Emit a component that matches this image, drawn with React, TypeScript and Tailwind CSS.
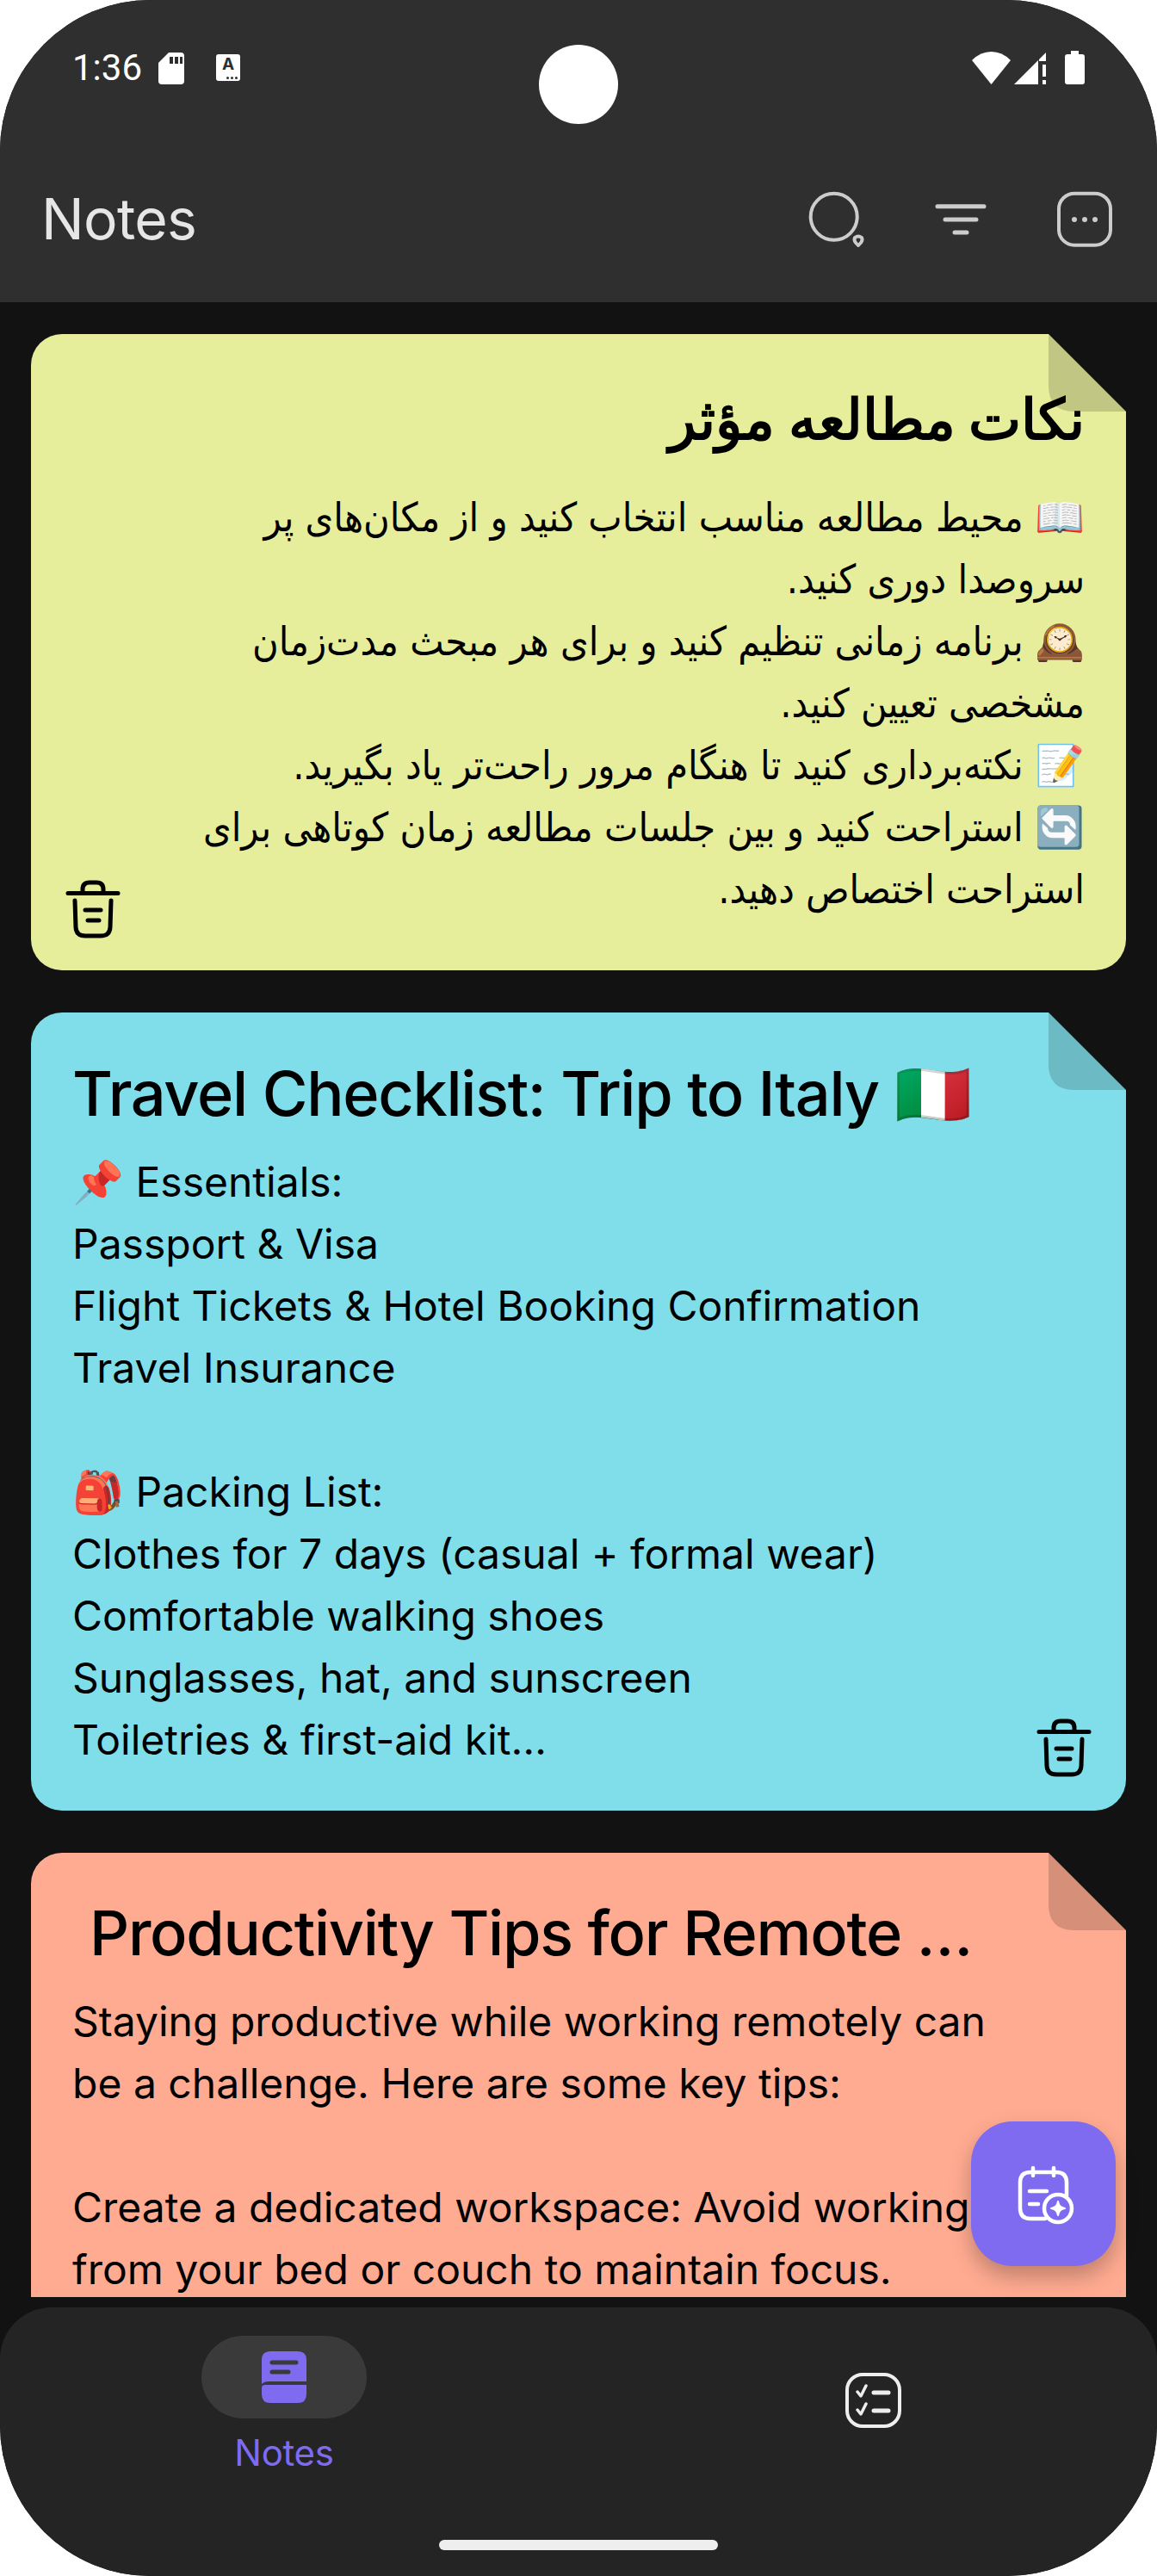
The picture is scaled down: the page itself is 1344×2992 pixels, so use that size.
import React from "react";

const Trash = () => (
  <svg width="66" height="72" viewBox="0 0 66 72" fill="none" stroke="#000" strokeWidth="5" strokeLinecap="round" strokeLinejoin="round">
    <path d="M4 16.5 H62" />
    <path d="M21 15 V12 Q21 4 29 4 H37 Q45 4 45 12 V15" />
    <path d="M12 25 L13 56 Q13.500 66 24 66 H42 Q52.500 66 53 56 L54 25" />
    <path d="M24 36 H42" />
    <path d="M27 48 H40" />
  </svg>
);

const Fold = () => (
  <svg className="absolute right-0 top-0" width="90" height="90" viewBox="0 0 90 90">
    <path d="M0 0 H90 V90 Z" fill="#121212" />
    <path d="M0 0 L90 90 H30 Q0 90 0 60 Z" fill="#000" fillOpacity="0.16" />
  </svg>
);

const sans = "font-['Inter','Noto_Sans',sans-serif]";
const fa = "font-['DejaVu_Sans_Condensed','DejaVu_Sans',sans-serif] font-stretch-condensed";

export default function App() {
  return (
    <div className="relative h-[2992px] w-[1344px] bg-white">
      <div className={`flex h-full flex-col overflow-hidden rounded-[175px] bg-[#121212] ${sans}`}>
        <header className="h-[351px] shrink-0 bg-[#2f2f2f]">
          <div className="flex h-[39px] items-center pl-[84px] pr-[84px] pt-[59px] text-white box-content">
            <span className="w-[100px] font-['Roboto',sans-serif] text-[42px] leading-[39px]">1:36</span>
            <svg width="30" height="38" viewBox="0 0 30 38" fill="#fff"><path d="M12 1 H26 Q30 1 30 5 V34 Q30 38 26 38 H4 Q0 38 0 34 V13 Z" /><path d="M13 6h4v8h-4zM19 6h4v8h-4zM25 6h3v8h-3z" fill="#2f2f2f" /></svg>
            <div className="relative ml-[37px] flex h-[31px] w-[28px] items-start justify-center rounded-[3px] bg-white text-[19px] font-bold leading-[24px] text-[#2f2f2f]">A
              <span className="absolute bottom-[2px] right-[3px] h-[3px] w-[3px] rounded-full bg-[#2f2f2f]" />
              <span className="absolute bottom-[2px] right-[8px] h-[3px] w-[3px] rounded-full bg-[#2f2f2f]" />
              <span className="absolute bottom-[2px] right-[13px] h-[3px] w-[3px] rounded-full bg-[#2f2f2f]" />
            </div>
            <div className="ml-auto flex items-center">
              <svg width="45" height="38" viewBox="0 0 45 38" fill="#fff"><path d="M22.500 38 L0 10 Q10 0 22.500 0 Q35 0 45 10 Z" /></svg>
              <svg className="ml-[4px]" width="37" height="38" viewBox="0 0 37 38" fill="#fff"><path d="M0 38 L28 10 V38 Z" /><path d="M29 9 L37 1 V11 H29 Z" /><path d="M33 15h4v14h-4zM33 33h4v5h-4z" /></svg>
              <svg className="ml-[22px]" width="23" height="39" viewBox="0 0 23 39" fill="#fff"><path d="M7 0 H16 V4 H20 Q23 4 23 7 V36 Q23 39 20 39 H3 Q0 39 0 36 V7 Q0 4 3 4 H7 Z" /></svg>
            </div>
          </div>
          <div className="mt-[108px] flex h-[96px] items-center pl-[48px] pr-[48px] text-[#e6e6e6]">
            <span className="text-[66px] leading-[96px] tracking-[-0.7px]">Notes</span>
            <div className="ml-auto flex gap-[72px]">
              <svg width="72" height="72" viewBox="0 0 72 72" fill="none" stroke="#cccccc" strokeWidth="4">
                <circle cx="32.700" cy="33.700" r="27" />
                <path d="M57 58 Q61 55 65 58 Q67 62 61 67 Q55 62 57 58 Z" strokeLinejoin="round" />
              </svg>
              <svg width="72" height="72" viewBox="0 0 72 72" fill="none" stroke="#cccccc" strokeWidth="5" strokeLinecap="round">
                <path d="M9 21.700 H63 M18 37 H54 M29 52 H43" />
              </svg>
              <svg width="72" height="72" viewBox="0 0 72 72" fill="none" stroke="#cccccc" strokeWidth="4">
                <rect x="6" y="6.700" width="60" height="60" rx="18" />
                <circle cx="24" cy="37" r="3" fill="#cccccc" stroke="none" />
                <circle cx="36" cy="37" r="3" fill="#cccccc" stroke="none" />
                <circle cx="48" cy="37" r="3" fill="#cccccc" stroke="none" />
              </svg>
            </div>
          </div>
        </header>

        <main className="flex h-[2317px] shrink-0 flex-col gap-[49px] overflow-hidden px-[36px] pt-[37px] text-black">
          <article dir="rtl" className="relative h-[739px] shrink-0 rounded-[36px] bg-[#e6ee9c] px-[48px] pt-[51px]">
            <Fold />
            <h2 className="text-[65px] font-bold leading-[96px]">نکات مطالعه مؤثر</h2>
            <div className={`mt-[30px] whitespace-nowrap text-[46.5px] leading-[72px] ${fa}`}>
              <div>📖 محیط مطالعه مناسب انتخاب کنید و از مکان‌های پر</div>
              <div>سروصدا دوری کنید.</div>
              <div>🕰️ برنامه زمانی تنظیم کنید و برای هر مبحث مدت‌زمان</div>
              <div>مشخصی تعیین کنید.</div>
              <div>📝 نکته‌برداری کنید تا هنگام مرور راحت‌تر یاد بگیرید.</div>
              <div>🔄 استراحت کنید و بین جلسات مطالعه زمان کوتاهی برای</div>
              <div>استراحت اختصاص دهید.</div>
            </div>
            <div className="absolute bottom-[34px] left-[39px]"><Trash /></div>
          </article>

          <article className="relative h-[927px] shrink-0 rounded-[36px] bg-[#80deea] px-[48px] pt-[46px]">
            <Fold />
            <h2 className="whitespace-nowrap text-[72px] font-medium leading-[96px] tracking-[-1.3px]">Travel Checklist: Trip to Italy 🇮🇹</h2>
            <div className="mt-[19px] whitespace-nowrap text-[48px] leading-[72px]">
              <div>📌 Essentials:</div>
              <div>Passport &amp; Visa</div>
              <div>Flight Tickets &amp; Hotel Booking Confirmation</div>
              <div>Travel Insurance</div>
              <div className="h-[72px]" />
              <div>🎒 Packing List:</div>
              <div>Clothes for 7 days (casual + formal wear)</div>
              <div>Comfortable walking shoes</div>
              <div>Sunglasses, hat, and sunscreen</div>
              <div>Toiletries &amp; first-aid kit…</div>
            </div>
            <div className="absolute bottom-[36px] right-[39px]"><Trash /></div>
          </article>

          <article className="relative shrink-0 rounded-t-[36px] bg-[#ffab91] pl-[48px] pr-[48px] pt-[45px]">
            <Fold />
            <h2 className="whitespace-nowrap pl-[20px] text-[72px] font-medium leading-[96px] tracking-[-1.3px]">Productivity Tips for Remote …</h2>
            <div className="mt-[19px] whitespace-nowrap text-[48px] leading-[72px]">
              <div>Staying productive while working remotely can</div>
              <div>be a challenge. Here are some key tips:</div>
              <div className="h-[72px]" />
              <div>Create a dedicated workspace: Avoid working</div>
              <div>from your bed or couch to maintain focus.</div>
            </div>
          </article>
        </main>

        <nav className="mt-[12px] flex h-[312px] shrink-0 flex-col rounded-t-[60px] bg-[#242424]">
          <div className="flex items-start pl-[234px]">
            <div className="mt-[33px] flex w-[192px] flex-col items-center">
              <div className="flex h-[96px] w-[192px] items-center justify-center rounded-full bg-[#3a3a3a]">
                <svg width="52" height="60" viewBox="0 0 52 60" fill="#7f6bef">
                  <path d="M10 0 H42 Q52 0 52 10 V35 H8 Q3 35 0 38 V10 Q0 0 10 0 Z" />
                  <path d="M4 39 H52 V50 Q52 60 42 60 H10 Q0 60 0 50 V43 Q0 39 4 39 Z" />
                  <path d="M12 13 H40 M12 24 H31" stroke="#3a3a3a" strokeWidth="5" strokeLinecap="round" />
                </svg>
              </div>
              <span className="mt-[12px] text-[42px] leading-[56px] tracking-[-0.3px] text-[#7f6bef]">Notes</span>
            </div>
            <svg className="ml-[556px] mt-[76px]" width="65" height="64" viewBox="0 0 65 64" fill="none" stroke="#eeeeee" strokeWidth="4" strokeLinecap="round" strokeLinejoin="round">
              <rect x="2" y="2" width="61" height="60" rx="18" />
              <path d="M14 22 L18 27 L24 15 M14 43 L18 48 L24 36" strokeWidth="3.500" />
              <path d="M33 23 H50 M33 44 H50" strokeWidth="5" />
            </svg>
          </div>
          <div className="mt-auto mb-[30px] h-[12px] w-[324px] self-center rounded-full bg-[#eeeeee]" />
        </nav>
      </div>

      <div className="absolute left-[626px] top-[52px] h-[92px] w-[92px] rounded-full bg-white" />

      <button className="absolute left-[1128px] top-[2464px] flex h-[168px] w-[168px] items-center justify-center rounded-[48px] bg-[#7f6bef] shadow-[0_12px_24px_rgba(0,0,0,0.25)]">
        <svg width="72" height="72" viewBox="0 0 72 72" fill="none" stroke="#fff" strokeWidth="4.500" strokeLinecap="round" strokeLinejoin="round">
          <path d="M38 65 H21 Q9 65 9 53 V23 Q9 11 21 11 H51 Q63 11 63 23 V38" />
          <path d="M24 6 V15 M48 6 V15" />
          <path d="M20 33 H40 M20 48 H30" />
          <circle cx="53" cy="53" r="16" />
          <path d="M53 45 Q54 52 61 53 Q54 54 53 61 Q52 54 45 53 Q52 52 53 45 Z" fill="#fff" strokeWidth="2" />
        </svg>
      </button>
    </div>
  );
}
